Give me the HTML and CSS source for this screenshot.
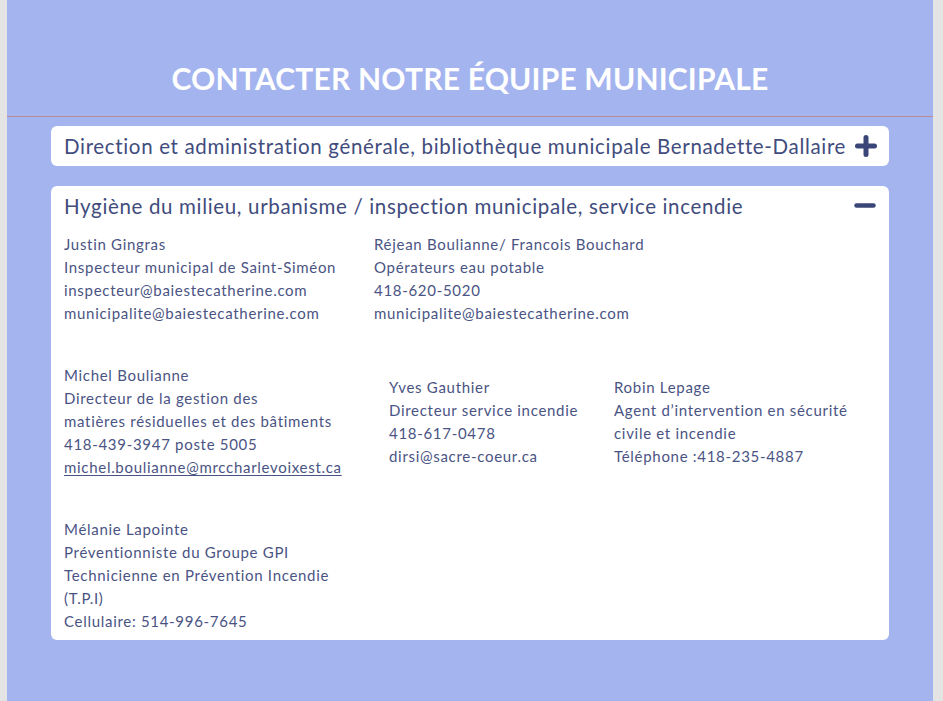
FILE: index.html
```html
<!DOCTYPE html>
<html lang="fr">
<head>
<meta charset="utf-8">
<title>Contacter notre équipe municipale</title>
<link rel="stylesheet" href="styles.css">
</head>
<body>
<main class="panel">
  <header class="panel-head">
    <h1 class="title">CONTACTER NOTRE ÉQUIPE MUNICIPALE</h1>
  </header>
  <div class="accordion">
    <section class="card">
      <div class="card-head">
        <h2 class="card-title">Direction et administration générale, bibliothèque municipale Bernadette-Dallaire</h2>
        <svg class="icon" width="22" height="22" viewBox="0 0 22 22" aria-hidden="true"><path d="M11 2.5V19.5M2.5 11H19.5" stroke="currentColor" stroke-width="5" stroke-linecap="round" fill="none"/></svg>
      </div>
    </section>
    <section class="card open">
      <div class="card-head">
        <h2 class="card-title">Hygiène du milieu, urbanisme / inspection municipale, service incendie</h2>
        <svg class="icon" width="22" height="22" viewBox="0 0 22 22" aria-hidden="true"><path d="M2.5 10.5H19.5" stroke="currentColor" stroke-width="4.5" stroke-linecap="round" fill="none"/></svg>
      </div>
      <div class="card-body">
        <div class="row row-1">
          <p class="contact c-a">Justin Gingras<br>Inspecteur municipal de Saint-Siméon<br>inspecteur@baiestecatherine.com<br>municipalite@baiestecatherine.com</p>
          <p class="contact">Réjean Boulianne/ Francois Bouchard<br>Opérateurs eau potable<br>418-620-5020<br>municipalite@baiestecatherine.com</p>
        </div>
        <div class="row row-2">
          <p class="contact c-b">Michel Boulianne<br>Directeur de la gestion des<br>matières résiduelles et des bâtiments<br>418-439-3947 poste 5005<br><a href="#">michel.boulianne@mrccharlevoixest.ca</a></p>
          <p class="contact c-c shift">Yves Gauthier<br>Directeur service incendie<br>418-617-0478<br>dirsi@sacre-coeur.ca</p>
          <p class="contact shift">Robin Lepage<br>Agent d’intervention en sécurité<br>civile et incendie<br>Téléphone :418-235-4887</p>
        </div>
        <div class="row row-3">
          <p class="contact c-d">Mélanie Lapointe<br>Préventionniste du Groupe GPI<br>Technicienne en Prévention Incendie<br>(T.P.I)<br>Cellulaire: 514-996-7645</p>
        </div>
      </div>
    </section>
  </div>
</main>
</body>
</html>
```

FILE: styles.css
```css
* { box-sizing: border-box; }
html, body { margin: 0; padding: 0; }
body {
  background: #e4e4e4;
  font-family: Lato, "Noto Sans", sans-serif;
  color: #4a5484;
}
.panel {
  margin: 0 10px 0 7px;
  height: 701px;
  background: #a4b4ef;
  overflow: hidden;
}
.panel-head {
  height: 117px;
  border-bottom: 1px solid #b98a94;
  display: flex;
  align-items: flex-start;
  justify-content: center;
  padding-top: 59px;
}
.title {
  margin: 0;
  font-size: 30px;
  line-height: 38px;
  font-weight: 700;
  color: #ffffff;
  letter-spacing: 0.2px;
}
.accordion {
  padding: 9px 44px 0 44px;
  display: flex;
  flex-direction: column;
  gap: 20px;
}
.card {
  background: #ffffff;
  border-radius: 6px;
}
.card-head {
  display: flex;
  align-items: center;
  justify-content: space-between;
  height: 40px;
  padding: 0 12px 0 13px;
}
.card-title {
  margin: 0;
  font-size: 20.5px;
  font-weight: 400;
  color: #414c7d;
  white-space: nowrap;
  letter-spacing: 0.66px;
}
.icon { color: #3b4678; flex: none; }
.open .card-head { padding-right: 13px; }
.card-body {
  padding: 7px 13px 7px 13px;
  display: flex;
  flex-direction: column;
  gap: 39px;
}
.row { display: flex; align-items: flex-start; }
.contact {
  margin: 0;
  font-size: 15px;
  line-height: 23px;
  color: #4a5484;
  letter-spacing: 0.7px;
}
.contact a { color: inherit; text-decoration: underline; text-underline-offset: 2px; }
.c-a { width: 310px; }
.c-b { width: 325px; }
.c-c { width: 225px; }
.shift { margin-top: 12px; }
```
